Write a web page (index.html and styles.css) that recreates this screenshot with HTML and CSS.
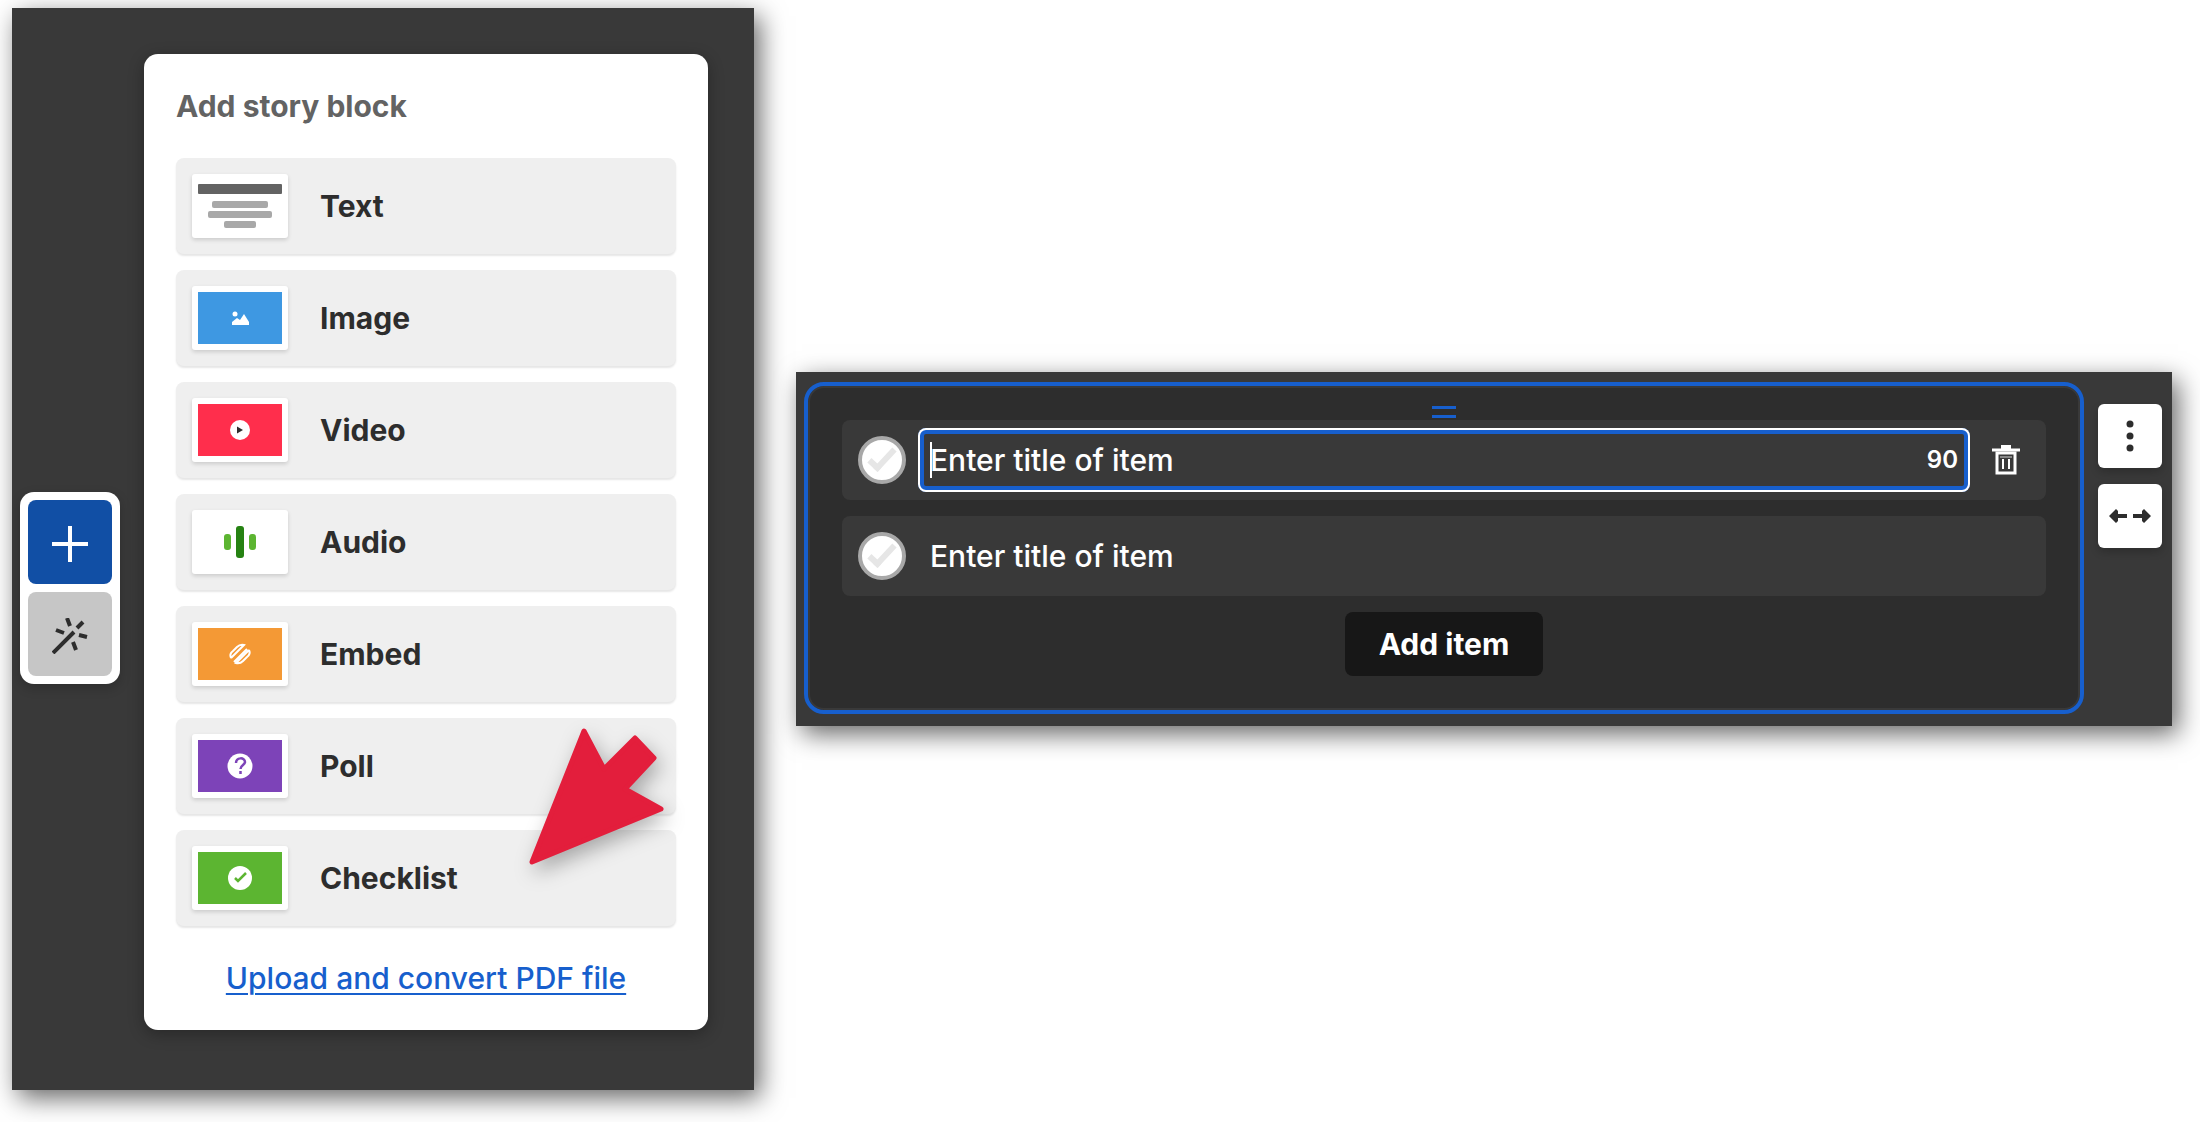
FILE: index.html
```html
<!DOCTYPE html>
<html lang="en">
<head>
    <meta charset="UTF-8">
    <meta name="viewport" content="width=device-width, initial-scale=1.0">
    <title>Story editor</title>
    <link rel="stylesheet" href="styles.css">
</head>
<body>
    <main class="page">
        <section class="panel picker">
            <div class="toolbar">
                <button type="button" class="tool tool-add" aria-label="Add block">
                    <svg width="36" height="36" viewBox="0 0 36 36"><path d="M18 0v36M0 18h36" stroke="#fff" stroke-width="4"/></svg>
                </button>
                <button type="button" class="tool tool-magic" aria-label="Magic">
                    <svg width="36" height="36" viewBox="0 0 36 36" fill="none" stroke="#2d2d2d" stroke-width="4"><path d="M1 35L22 14M25 10L31 4M15 0l3 8M4 12l8 3M27 17l8 2M21 24l3 8"/></svg>
                </button>
            </div>
            <div class="card">
                <h1 class="card-title">Add story block</h1>
                <div class="blocks">
                    <button type="button" class="block">
                        <span class="thumb">
                            <svg width="84" height="52" viewBox="0 0 84 52"><rect y="4" width="84" height="10" rx="1" fill="#636363"/><g fill="#a8a8a8"><rect x="14" y="21" width="56" height="7" rx="2"/><rect x="10" y="31" width="64" height="7" rx="2"/><rect x="26" y="41" width="32" height="7" rx="2"/></g></svg>
                        </span>
                        Text
                    </button>
                    <button type="button" class="block">
                        <span class="thumb">
                            <svg class="image" width="84" height="52" viewBox="0 0 84 52"><g fill="#fff"><circle cx="37" cy="22" r="2.500"/><path d="M34 33v-3l5-4 3 2 4-6 5 8v3z"/></g></svg>
                        </span>
                        Image
                    </button>
                    <button type="button" class="block">
                        <span class="thumb">
                            <svg class="video" width="84" height="52" viewBox="0 0 84 52"><circle cx="42" cy="26" r="10" fill="#fff"/><path d="M39 22.500v7l6-3.500z" fill="#2d2d2d"/></svg>
                        </span>
                        Video
                    </button>
                    <button type="button" class="block">
                        <span class="thumb">
                            <svg width="84" height="52" viewBox="0 0 84 52"><rect x="26" y="18" width="7" height="16" rx="3" fill="#5cb531"/><rect x="38" y="10" width="8" height="32" rx="3" fill="#268212"/><rect x="51" y="18" width="7" height="16" rx="3" fill="#5cb531"/></svg>
                        </span>
                        Audio
                    </button>
                    <button type="button" class="block">
                        <span class="thumb">
                            <svg class="embed" width="84" height="52" viewBox="0 0 84 52"><path d="M36 34L49 21M33 30Q31 26 35 23L39 19Q42 16 46 17L33 30M51 22Q53 26 49 29L45 33Q42 36 38 35L51 22" fill="none" stroke="#fff" stroke-width="2"/></svg>
                        </span>
                        Embed
                    </button>
                    <button type="button" class="block">
                        <span class="thumb">
                            <svg class="poll" width="84" height="52" viewBox="0 0 84 52"><circle cx="42" cy="26" r="12.500" fill="#fff"/><path d="M38 23c0-6 9-6 9-1 0 3-4.500 3-4.500 7M42.500 31v3" fill="none" stroke="#7d43b8" stroke-width="2.500"/></svg>
                        </span>
                        Poll
                    </button>
                    <button type="button" class="block">
                        <span class="thumb">
                            <svg class="check" width="84" height="52" viewBox="0 0 84 52"><circle cx="42" cy="26" r="12" fill="#fff"/><path d="M37 26l3 3 8-8" fill="none" stroke="#5cb531" stroke-width="2.500"/></svg>
                        </span>
                        Checklist
                    </button>
                </div>
                <a href="#" class="upload">Upload and convert PDF file</a>
                <svg class="pointer" width="150" height="150" viewBox="0 0 150 150"><path d="M12 140L64 9L84 47L115 16L134 36L105 67L141 87z" fill="#e31e3c" stroke="#e31e3c" stroke-width="5" stroke-linejoin="round"/></svg>
            </div>
        </section>

        <section class="panel editor">
            <form class="checklist">
                <button type="button" class="handle" aria-label="Move block"></button>
                <div class="items">
                    <div class="item">
                        <input type="checkbox" class="tick" aria-label="Mark item 1 as done">
                        <div class="field active">
                            <input type="text" class="title" placeholder="Enter title of item" aria-label="Title of item 1">
                            <span class="caret"></span>
                            <span class="count">90</span>
                        </div>
                        <button type="button" class="delete" aria-label="Delete item">
                            <svg width="28" height="30" viewBox="0 0 28 30" fill="none" stroke="#fff"><path d="M0 5h28" stroke-width="3"/><path d="M9 2h10" stroke-width="4"/><path d="M5 8v20h18V8z" stroke-width="3"/><path d="M8 12h12" stroke="#888" stroke-width="2"/><path d="M11 14v10M17 14v10" stroke-width="2"/></svg>
                        </button>
                    </div>
                    <div class="item">
                        <input type="checkbox" class="tick" aria-label="Mark item 2 as done">
                        <div class="field">
                            <input type="text" class="title" placeholder="Enter title of item" aria-label="Title of item 2">
                        </div>
                    </div>
                </div>
                <button type="button" class="add-item">Add item</button>
            </form>
            <div class="actions">
                <button type="button" class="action" aria-label="More">
                    <svg width="44" height="32" viewBox="0 0 44 32" fill="#2d2d2d"><circle cx="22" cy="4" r="3.500"/><circle cx="22" cy="16" r="3.500"/><circle cx="22" cy="28" r="3.500"/></svg>
                </button>
                <button type="button" class="action" aria-label="Width">
                    <svg width="44" height="16" viewBox="0 0 44 16" fill="#2d2d2d"><path d="M1 8l7-7 2 2v3h9v4h-9v3l-2 2zM43 8l-7-7-2 2v3h-9v4h9v3l2 2z"/></svg>
                </button>
            </div>
        </section>
    </main>
</body>
</html>
```
FILE: styles.css
```css
* {
    box-sizing: border-box;
}
body {
    margin: 0;
    background: #fff;
    font-family: Inter, "Liberation Sans", sans-serif;
    font-size: 30px;
    line-height: 36px;
    color: #2d2d2d;
}
button, input {
    font: inherit;
    color: inherit;
    border: 0;
    padding: 0;
    margin: 0;
}
svg {
    display: block;
}
.page {
    display: grid;
    grid-template-columns: 371fr 688fr;
    gap: 42px;
    align-items: center;
    padding: 8px 28px 32px 12px;
}
.panel {
    display: flex;
    background: #393939;
    box-shadow: 6px 8px 24px rgba(0, 0, 0, 0.6);
}

/* block picker */
.picker {
    align-items: center;
    gap: 24px;
    padding: 46px 46px 60px 8px;
}
.toolbar {
    display: flex;
    flex-direction: column;
    gap: 8px;
    padding: 8px;
    margin-top: 92px;
    border-radius: 14px;
    background: #fff;
    box-shadow: 0 4px 12px rgba(0, 0, 0, 0.2);
}
.tool {
    display: grid;
    place-items: center;
    width: 84px;
    height: 84px;
    padding-top: 4px;
    border-radius: 8px;
}
.tool-add {
    background: #114fa5;
}
.tool-magic {
    background: #c6c6c6;
}
.card {
    position: relative;
    flex: 1;
    display: flex;
    flex-direction: column;
    gap: 34px;
    padding: 34px 32px;
    border-radius: 14px;
    background: #fff;
    box-shadow: 0 4px 16px rgba(0, 0, 0, 0.3);
}
.card-title {
    margin: 0;
    font-size: 30px;
    font-weight: 700;
    color: #636363;
}
.blocks {
    display: flex;
    flex-direction: column;
    gap: 16px;
}
.block {
    display: flex;
    align-items: center;
    gap: 32px;
    padding: 16px;
    border-radius: 8px;
    background: #efefef;
    box-shadow: 0 2px 2px rgba(0, 0, 0, 0.1);
    font-weight: 700;
}
.thumb {
    padding: 6px;
    border-radius: 3px;
    background: #fff;
    box-shadow: 0 2px 4px rgba(0, 0, 0, 0.15);
}
.image {
    background: #3e98e2;
}
.video {
    background: #ff2e4c;
}
.embed {
    background: #f49935;
}
.poll {
    background: #7d43b8;
}
.check {
    background: #5cb531;
}
.upload {
    align-self: center;
    font-weight: 500;
    color: #175fcd;
    text-decoration-thickness: 2px;
    text-underline-offset: 4px;
}
.pointer {
    position: absolute;
    right: 38px;
    bottom: 158px;
    filter: drop-shadow(4px 8px 10px rgba(0, 0, 0, 0.3));
}

/* checklist editor */
.editor {
    align-items: flex-start;
    gap: 14px;
    padding: 10px 10px 12px 8px;
    color: #fff;
}
.checklist {
    flex: 1;
    display: flex;
    flex-direction: column;
    align-items: center;
    padding: 20px 34px 34px;
    border: 4px solid #175fcd;
    border-radius: 20px;
    background: #2d2d2d;
    box-shadow: inset 0 0 0 2px #393939;
}
.handle {
    width: 24px;
    height: 12px;
    margin-bottom: 2px;
    border-top: 3px solid #175fcd;
    border-bottom: 3px solid #175fcd;
    background: none;
}
.items {
    align-self: stretch;
    display: flex;
    flex-direction: column;
    gap: 16px;
    margin-bottom: 16px;
}
.item {
    display: flex;
    align-items: center;
    gap: 12px;
    height: 80px;
    padding-left: 16px;
    border-radius: 8px;
    background: #393939;
}
.tick {
    appearance: none;
    display: grid;
    place-items: center;
    width: 48px;
    height: 48px;
    border: 4px solid #a8a8a8;
    border-radius: 50%;
    background: #fff;
}
.tick::before {
    content: "";
    box-sizing: border-box;
    width: 28px;
    height: 14px;
    margin-bottom: 6px;
    border-left: 6px solid #e6e6e6;
    border-bottom: 6px solid #e6e6e6;
    transform: rotate(-47deg);
}
.field {
    position: relative;
    flex: 1;
    display: flex;
    align-items: center;
    height: 64px;
    padding: 0 12px;
}
.active {
    border-radius: 8px;
    box-shadow: inset 0 0 0 2px #fff, inset 0 0 0 6px #175fcd;
}
.title {
    flex: 1;
    min-width: 0;
    background: none;
    outline: none;
    font-weight: 500;
}
.title::placeholder {
    color: #fff;
    opacity: 1;
}
.caret {
    position: absolute;
    left: 12px;
    top: 14px;
    width: 2px;
    height: 36px;
    background: #fff;
}
.count {
    font-size: 24px;
    font-weight: 600;
}
.delete {
    display: grid;
    place-items: center;
    width: 72px;
    height: 64px;
    margin: 0 4px 0 -12px;
    background: none;
}
.add-item {
    padding: 14px 34px;
    border-radius: 8px;
    background: #171717;
    font-weight: 700;
}
.actions {
    display: flex;
    flex-direction: column;
    gap: 16px;
    margin-top: 22px;
}
.action {
    display: grid;
    place-items: center;
    width: 64px;
    height: 64px;
    border-radius: 6px;
    background: #fff;
    box-shadow: 0 4px 8px rgba(0, 0, 0, 0.2);
}
```
